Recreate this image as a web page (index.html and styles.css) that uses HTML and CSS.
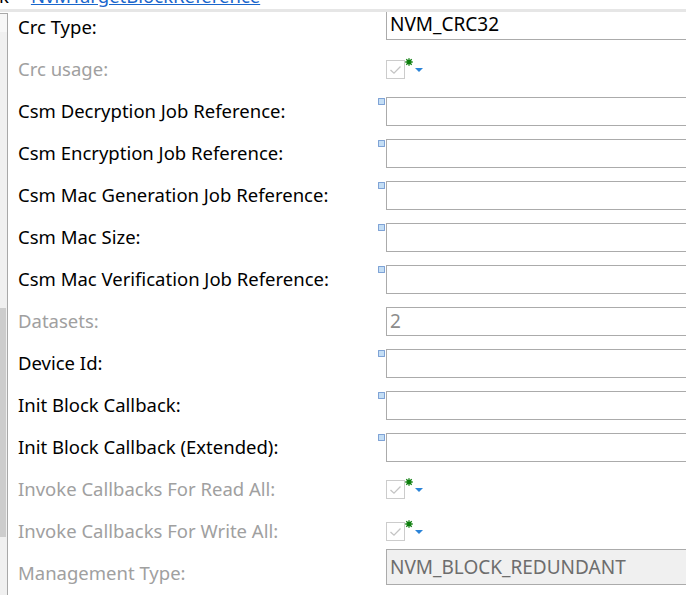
FILE: index.html
```html
<!DOCTYPE html>
<html>
<head>
<meta charset="utf-8">
<link rel="stylesheet" href="styles.css">
</head>
<body>
<div class="topbar">
  <div class="crumb"><span class="crumb-k">k</span><a class="crumb-link" href="#">NvMTargetBlockReference</a></div>
</div>
<div class="sep"></div>
<div class="main">
  <div class="strip">
    <div class="strip-head"></div>
    <div class="thumb"></div>
  </div>
  <div class="form">
    <div class="rows">
      <div class="row">
        <div class="label">Crc Type:</div>
        <div class="value"><span class="mark"></span><div class="field combo-top">NVM_CRC32</div></div>
      </div>
      <div class="row">
        <div class="label disabled">Crc usage:</div>
        <div class="value"><span class="mark"></span>
          <span class="check"><svg width="19" height="19" viewBox="0 0 19 19"><rect x="0.5" y="0.5" width="18" height="18" fill="#fff" stroke="#cccccc"/><path d="M4.5 10 L8 13.2 L14.5 6.5" fill="none" stroke="#c4c4c4" stroke-width="1.3"/></svg></span>
          <span class="star"><svg width="8" height="8" viewBox="0 0 8 8"><path d="M4 0.3V7.7M0.3 4H7.7M1.3 1.3L6.7 6.7M6.7 1.3L1.3 6.7" stroke="#0b7d0b" stroke-width="1.3"/></svg></span>
          <span class="drop"><svg width="8" height="4" viewBox="0 0 8 4"><polygon points="0,0 8,0 4,4" fill="#2b83d8"/></svg></span>
        </div>
      </div>
      <div class="row">
        <div class="label">Csm Decryption Job Reference:</div>
        <div class="value"><span class="mark"><svg width="7" height="7" viewBox="0 0 7 7"><rect x="0.5" y="0.5" width="6" height="6" fill="#c4def5" stroke="#1d58b3" stroke-dasharray="1 1"/></svg></span><div class="field"></div></div>
      </div>
      <div class="row">
        <div class="label">Csm Encryption Job Reference:</div>
        <div class="value"><span class="mark"><svg width="7" height="7" viewBox="0 0 7 7"><rect x="0.5" y="0.5" width="6" height="6" fill="#c4def5" stroke="#1d58b3" stroke-dasharray="1 1"/></svg></span><div class="field"></div></div>
      </div>
      <div class="row">
        <div class="label">Csm Mac Generation Job Reference:</div>
        <div class="value"><span class="mark"><svg width="7" height="7" viewBox="0 0 7 7"><rect x="0.5" y="0.5" width="6" height="6" fill="#c4def5" stroke="#1d58b3" stroke-dasharray="1 1"/></svg></span><div class="field"></div></div>
      </div>
      <div class="row">
        <div class="label">Csm Mac Size:</div>
        <div class="value"><span class="mark"><svg width="7" height="7" viewBox="0 0 7 7"><rect x="0.5" y="0.5" width="6" height="6" fill="#c4def5" stroke="#1d58b3" stroke-dasharray="1 1"/></svg></span><div class="field"></div></div>
      </div>
      <div class="row">
        <div class="label">Csm Mac Verification Job Reference:</div>
        <div class="value"><span class="mark"><svg width="7" height="7" viewBox="0 0 7 7"><rect x="0.5" y="0.5" width="6" height="6" fill="#c4def5" stroke="#1d58b3" stroke-dasharray="1 1"/></svg></span><div class="field"></div></div>
      </div>
      <div class="row">
        <div class="label disabled">Datasets:</div>
        <div class="value"><span class="mark"></span><div class="field field-disabled">2</div></div>
      </div>
      <div class="row">
        <div class="label">Device Id:</div>
        <div class="value"><span class="mark"><svg width="7" height="7" viewBox="0 0 7 7"><rect x="0.5" y="0.5" width="6" height="6" fill="#c4def5" stroke="#1d58b3" stroke-dasharray="1 1"/></svg></span><div class="field"></div></div>
      </div>
      <div class="row">
        <div class="label">Init Block Callback:</div>
        <div class="value"><span class="mark"><svg width="7" height="7" viewBox="0 0 7 7"><rect x="0.5" y="0.5" width="6" height="6" fill="#c4def5" stroke="#1d58b3" stroke-dasharray="1 1"/></svg></span><div class="field"></div></div>
      </div>
      <div class="row">
        <div class="label">Init Block Callback (Extended):</div>
        <div class="value"><span class="mark"><svg width="7" height="7" viewBox="0 0 7 7"><rect x="0.5" y="0.5" width="6" height="6" fill="#c4def5" stroke="#1d58b3" stroke-dasharray="1 1"/></svg></span><div class="field"></div></div>
      </div>
      <div class="row">
        <div class="label disabled">Invoke Callbacks For Read All:</div>
        <div class="value"><span class="mark"></span>
          <span class="check"><svg width="19" height="19" viewBox="0 0 19 19"><rect x="0.5" y="0.5" width="18" height="18" fill="#fff" stroke="#cccccc"/><path d="M4.5 10 L8 13.2 L14.5 6.5" fill="none" stroke="#c4c4c4" stroke-width="1.3"/></svg></span>
          <span class="star"><svg width="8" height="8" viewBox="0 0 8 8"><path d="M4 0.3V7.7M0.3 4H7.7M1.3 1.3L6.7 6.7M6.7 1.3L1.3 6.7" stroke="#0b7d0b" stroke-width="1.3"/></svg></span>
          <span class="drop"><svg width="8" height="4" viewBox="0 0 8 4"><polygon points="0,0 8,0 4,4" fill="#2b83d8"/></svg></span>
        </div>
      </div>
      <div class="row">
        <div class="label disabled">Invoke Callbacks For Write All:</div>
        <div class="value"><span class="mark"></span>
          <span class="check"><svg width="19" height="19" viewBox="0 0 19 19"><rect x="0.5" y="0.5" width="18" height="18" fill="#fff" stroke="#cccccc"/><path d="M4.5 10 L8 13.2 L14.5 6.5" fill="none" stroke="#c4c4c4" stroke-width="1.3"/></svg></span>
          <span class="star"><svg width="8" height="8" viewBox="0 0 8 8"><path d="M4 0.3V7.7M0.3 4H7.7M1.3 1.3L6.7 6.7M6.7 1.3L1.3 6.7" stroke="#0b7d0b" stroke-width="1.3"/></svg></span>
          <span class="drop"><svg width="8" height="4" viewBox="0 0 8 4"><polygon points="0,0 8,0 4,4" fill="#2b83d8"/></svg></span>
        </div>
      </div>
      <div class="row">
        <div class="label disabled">Management Type:</div>
        <div class="value"><span class="mark"></span><div class="field combo-disabled">NVM_BLOCK_REDUNDANT</div></div>
      </div>
    </div>
  </div>
</div>
</body>
</html>
```
FILE: styles.css
```css
html, body {
  margin: 0;
  padding: 0;
}
body {
  width: 686px;
  height: 595px;
  overflow: hidden;
  background: #ffffff;
  font-family: "Noto Sans", "Open Sans", sans-serif;
  font-size: 18.5px;
  color: #000000;
}
.topbar {
  height: 9px;
  overflow: hidden;
}
.crumb {
  display: flex;
  margin-top: -16px;
  line-height: 24px;
  white-space: nowrap;
}
.crumb-k {
  margin-left: -1px;
  color: #000;
}
.crumb-link {
  margin-left: 22px;
  color: #1a66cc;
  text-decoration: underline;
}
.sep {
  height: 3px;
  background: #e6e6e6;
}
.main {
  display: flex;
  height: 583px;
}
.strip {
  width: 7px;
  margin-top: 1px;
  border-top: 1px solid #a8a8a8;
  border-right: 1px solid #a8a8a8;
  background: #f0f0f0;
  display: flex;
  flex-direction: column;
}
.strip-head {
  height: 18px;
  background: #f7f7f7;
}
.thumb {
  margin-top: 276px;
  width: 6px;
  height: 229px;
  background: #cdcdcd;
}
.form {
  flex: 1;
  overflow: hidden;
  padding-left: 10px;
}
.rows {
  margin-top: -6px;
}
.row {
  display: grid;
  grid-template-columns: 359px 340px;
  height: 42px;
}
.label {
  line-height: 42px;
  white-space: nowrap;
}
.label.disabled {
  color: #a0a0a0;
}
.value {
  display: flex;
  align-items: flex-start;
}
.mark {
  width: 8px;
  margin-right: 1px;
  padding-left: 1px;
  box-sizing: border-box;
  padding-top: 8px;
  display: flex;
}
.field {
  width: 320px;
  height: 29px;
  margin-top: 7px;
  box-sizing: border-box;
  border: 1px solid #ababab;
  padding-left: 3px;
  font-size: 19px;
  line-height: 26px;
  white-space: nowrap;
}
.field.combo-top {
  height: 30px;
  margin-top: 4px;
  color: #000;
}
.field.field-disabled {
  color: #8c8c8c;
}
.field.combo-disabled {
  height: 36px;
  margin-top: -3px;
  background: #f0f0f0;
  color: #6d6d6d;
  line-height: 34px;
}
.check {
  display: flex;
  margin-top: 12px;
}
.star {
  display: flex;
  margin-top: 10px;
  margin-left: 0;
}
.drop {
  display: flex;
  margin-top: 20px;
  margin-left: 2px;
}
```
